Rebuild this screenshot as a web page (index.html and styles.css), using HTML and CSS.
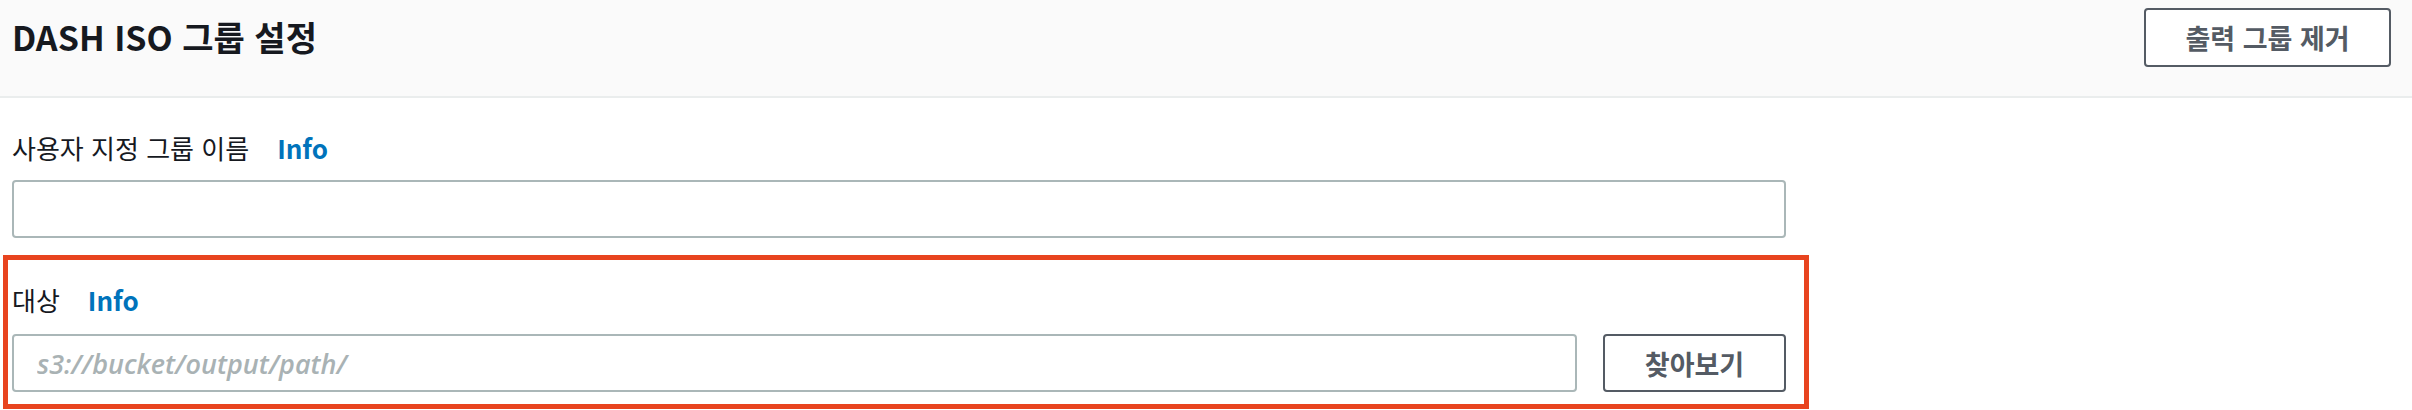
FILE: index.html
```html
<!DOCTYPE html>
<html lang="ko">
<head>
<meta charset="utf-8">
<title>DASH ISO 그룹 설정</title>
<link rel="stylesheet" href="styles.css">
</head>
<body>
<div class="panel">
  <header class="panel-header">
    <h2 class="panel-title">DASH ISO 그룹 설정</h2>
    <button class="btn btn-remove" type="button">출력 그룹 제거</button>
  </header>
  <div class="panel-body">
    <div class="field field-name">
      <div class="field-label"><span class="label-text">사용자 지정 그룹 이름</span><a class="info-link" href="#">Info</a></div>
      <input class="text-input" type="text">
    </div>
    <div class="field field-target">
      <div class="field-label"><span class="label-text">대상</span><a class="info-link" href="#">Info</a></div>
      <div class="input-row">
        <input class="text-input path-input" type="text" placeholder="s3://bucket/output/path/">
        <button class="btn btn-browse" type="button">찾아보기</button>
      </div>
    </div>
  </div>
</div>
</body>
</html>
```
FILE: styles.css
```css
html, body {
  margin: 0;
  padding: 0;
  background: #ffffff;
}
body {
  width: 2412px;
  height: 410px;
  overflow: hidden;
  font-family: "Noto Sans CJK KR", "Noto Sans", sans-serif;
  color: #16191f;
}
.panel-header {
  box-sizing: border-box;
  height: 98px;
  background: #fafafa;
  border-bottom: 2px solid #eaeded;
  display: flex;
  justify-content: space-between;
  align-items: flex-start;
  padding: 8px 21px 0 12px;
}
.panel-title {
  margin: 5px 0 0 0;
  font-size: 34px;
  line-height: 48px;
  font-weight: 700;
  color: #16191f;
}
.btn {
  box-sizing: border-box;
  background: #ffffff;
  border: 2px solid #545b64;
  border-radius: 4px;
  color: #545b64;
  font-family: "Noto Sans CJK KR", "Noto Sans", sans-serif;
  font-weight: 700;
  font-size: 27px;
  height: 59px;
  padding: 0;
  cursor: pointer;
}
.btn-remove {
  width: 247px;
}
.btn-browse {
  width: 183px;
  height: 58px;
  flex: none;
}
.panel-body {
  padding: 33px 0 0 12px;
}
.field-label {
  display: flex;
  align-items: baseline;
  font-size: 26px;
  line-height: 34px;
}
.label-text {
  color: #16191f;
}
.info-link {
  margin-left: 28px;
  color: #0073bb;
  font-weight: 700;
  text-decoration: none;
}
.text-input {
  box-sizing: border-box;
  display: block;
  height: 58px;
  border: 2px solid #aab7b8;
  border-radius: 4px;
  background: #ffffff;
  padding: 0 23px;
  font-size: 27px;
  outline: none;
}
.field-name .text-input {
  width: 1774px;
  margin-top: 15px;
}
.field-target {
  box-sizing: border-box;
  width: 1806px;
  margin: 17px 0 0 -9px;
  border: 5px solid #e8441f;
  padding: 23px 18px 12px 4px;
}
.input-row {
  display: flex;
  gap: 26px;
  margin-top: 17px;
}
.path-input {
  flex: 1;
  min-width: 0;
  font-family: "Open Sans", "Noto Sans", sans-serif;
  font-style: italic;
}
.path-input::placeholder {
  color: #a9b2b4;
  font-style: italic;
  font-weight: 600;
}
```
